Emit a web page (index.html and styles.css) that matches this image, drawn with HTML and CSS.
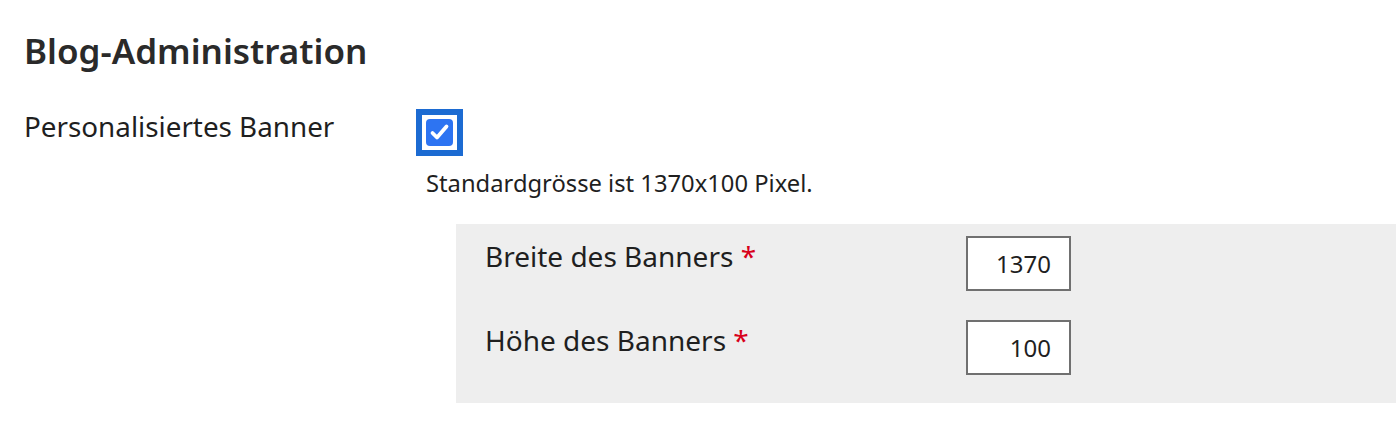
FILE: index.html
```html
<!DOCTYPE html>
<html lang="de">
<head>
<meta charset="utf-8">
<title>Blog-Administration</title>
<link rel="stylesheet" href="styles.css">
</head>
<body>
<div class="page">
  <h1 class="title">Blog-Administration</h1>
  <div class="row">
    <div class="row-label">Personalisiertes Banner</div>
    <div class="row-field">
      <span class="focus-ring">
        <span class="checkbox" role="checkbox" aria-checked="true">
          <svg viewBox="0 0 27 27" width="27" height="27"><polyline points="6.5,14 11,18.5 20.5,7.5" fill="none" stroke="#fff" stroke-width="3.8" stroke-linecap="round" stroke-linejoin="round"/></svg>
        </span>
      </span>
      <div class="hint">Standardgrösse ist 1370x100 Pixel.</div>
      <div class="panel">
        <div class="panel-row">
          <div class="panel-label">Breite des Banners <span class="req">*</span></div>
          <input class="num" type="text" value="1370">
        </div>
        <div class="panel-row">
          <div class="panel-label">Höhe des Banners <span class="req">*</span></div>
          <input class="num" type="text" value="100">
        </div>
      </div>
    </div>
  </div>
</div>
</body>
</html>
```
FILE: styles.css
```css
* { box-sizing: border-box; }
html, body {
  margin: 0;
  padding: 0;
  background: #ffffff;
}
body {
  font-family: "Noto Sans", "Open Sans", sans-serif;
  color: #1f1f1f;
}
.page {
  padding: 27px 0 0 24px;
}
.title {
  margin: 0;
  font-size: 35px;
  line-height: 48px;
  font-weight: 600;
  color: #2a2a2a;
}
.row {
  display: flex;
  align-items: flex-start;
  margin-top: 32px;
}
.row-label {
  width: 392px;
  flex: none;
  font-size: 27.8px;
  line-height: 38px;
}
.row-field {
  flex: 1;
  display: flex;
  flex-direction: column;
  align-items: flex-start;
}
.focus-ring {
  display: block;
  margin-top: 2px;
  border: 6px solid #1c6bd2;
  padding: 4px;
  background: #ffffff;
}
.checkbox {
  display: block;
  width: 27px;
  height: 27px;
  border-radius: 4px;
  background: #2d74f2;
}
.checkbox svg { display: block; }
.hint {
  margin-top: 11px;
  margin-left: 10px;
  font-size: 23.75px;
  line-height: 32px;
}
.panel {
  align-self: stretch;
  margin-top: 25px;
  margin-left: 40px;
  background: #eeeeee;
  padding: 12px 0 28px 29px;
  display: flex;
  flex-direction: column;
  gap: 29px;
}
.panel-row {
  display: flex;
  align-items: flex-start;
}
.panel-label {
  width: 481px;
  flex: none;
  margin-top: 1px;
  font-size: 28px;
  line-height: 38px;
}
.req {
  color: #d8001a;
}
.num {
  width: 105px;
  height: 55px;
  border: 2px solid #707070;
  background: #ffffff;
  padding: 0 18px 0 4px;
  text-align: right;
  font-family: "Noto Sans", "Open Sans", sans-serif;
  font-size: 24px;
  color: #1f1f1f;
  border-radius: 0;
  margin: 0;
}
```
